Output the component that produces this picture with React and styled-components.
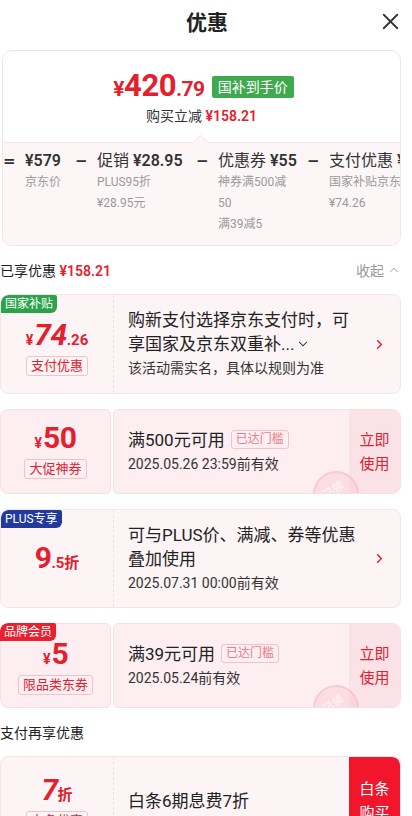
import React from "react";
import styled, { createGlobalStyle } from "styled-components";
import { X, ChevronRight, ChevronDown, ChevronUp } from "lucide-react";

const RED = "#e3202e";

const Global = createGlobalStyle`
  body {
    margin: 0;
    background: #fff;
    font-family: Roboto, "Noto Sans CJK SC", sans-serif;
    color: #222;
    overflow: hidden;
  }
`;

const breakdown = [
  { w: 38, title: <><b>¥579</b></>, subs: ["京东价"] },
  { w: 87, title: <>促销 <b>¥28.95</b></>, subs: ["PLUS95折", "¥28.95元"] },
  { w: 77, title: <>优惠券 <b>¥55</b></>, subs: ["神券满500减50", "满39减5"] },
  { w: 160, title: <>支付优惠 <b>¥74.26</b></>, subs: ["国家补贴京东支付优惠", "¥74.26"] },
];

export default function App() {
  return (
    <Page>
      <Global />
      <Header>
        <span />
        <Title>优惠</Title>
        <Close>
          <X size={27} strokeWidth={1.6} />
        </Close>
      </Header>

      <Content>
        <Summary>
          <SummaryTop>
            <PriceLine>
              <BigPrice>
                <small>¥</small>420<small>.79</small>
              </BigPrice>
              <GreenTag>国补到手价</GreenTag>
            </PriceLine>
            <SaveLine>
              购买立减 <RedStrong>¥158.21</RedStrong>
            </SaveLine>
          </SummaryTop>
          <SummaryBottom>
            <Breakdown>
              {breakdown.map((it, i) => (
                <React.Fragment key={i}>
                  <Op>{i === 0 ? "=" : "−"}</Op>
                  <Item $w={it.w}>
                    <ItemTitle>{it.title}</ItemTitle>
                    {it.subs.map((s) => (
                      <ItemSub key={s} $nowrap={i === 3}>{s}</ItemSub>
                    ))}
                  </Item>
                </React.Fragment>
              ))}
            </Breakdown>
          </SummaryBottom>
        </Summary>

        <SectionHead>
          <span>
            已享优惠 <RedStrong>¥158.21</RedStrong>
          </span>
          <Fold>
            收起 <ChevronUp size={14} strokeWidth={1.6} />
          </Fold>
        </SectionHead>

        <List>
          <Coupon $h={100}>
            <Tag $bg="#2aa34a">国家补贴</Tag>
            <Left $pt={8}>
              <Amount>
                <Yen>¥</Yen>
                <Num $italic>74</Num>
                <Dec>.26</Dec>
              </Amount>
              <Label>支付优惠</Label>
            </Left>
            <Right>
              <Body>
                <Main>购新支付选择京东支付时，可</Main>
                <Main>
                  享国家及京东双重补...
                  <ChevronDown size={14} strokeWidth={1.8} />
                </Main>
                <Sub>该活动需实名，具体以规则为准</Sub>
              </Body>
              <Arrow>
                <ChevronRight size={15} strokeWidth={2.4} />
              </Arrow>
            </Right>
          </Coupon>

          <Coupon $h={85} $ticket>
            <Left $ticket>
              <Amount>
                <Yen>¥</Yen>
                <Num>50</Num>
              </Amount>
              <Label>大促神券</Label>
            </Left>
            <Right $ticket>
              <Body>
                <Main>
                  满500元可用<Reached>已达门槛</Reached>
                </Main>
                <Sub>2025.05.26 23:59前有效</Sub>
              </Body>
              <Stamp>已领</Stamp>
              <Action>
                立即
                <br />
                使用
              </Action>
            </Right>
          </Coupon>

          <Coupon $h={99}>
            <Tag $bg="#223a9e">PLUS专享</Tag>
            <Left $pt={4}>
              <Amount>
                <Num>9</Num>
                <Dec>.5折</Dec>
              </Amount>
            </Left>
            <Right>
              <Body>
                <Main>可与PLUS价、满减、券等优惠</Main>
                <Main>叠加使用</Main>
                <Sub>2025.07.31 00:00前有效</Sub>
              </Body>
              <Arrow>
                <ChevronRight size={15} strokeWidth={2.4} />
              </Arrow>
            </Right>
          </Coupon>

          <Coupon $h={85} $ticket>
            <Tag $bg="#e8202f">品牌会员</Tag>
            <Left $ticket $pt={4}>
              <Amount>
                <Yen>¥</Yen>
                <Num>5</Num>
              </Amount>
              <Label>限品类东券</Label>
            </Left>
            <Right $ticket>
              <Body>
                <Main>
                  满39元可用<Reached>已达门槛</Reached>
                </Main>
                <Sub>2025.05.24前有效</Sub>
              </Body>
              <Stamp>已领</Stamp>
              <Action>
                立即
                <br />
                使用
              </Action>
            </Right>
          </Coupon>
        </List>

        <SectionHead>
          <span>支付再享优惠</span>
        </SectionHead>

        <Coupon $h={90}>
          <Left $pt={4}>
            <Amount>
              <Num $italic>7</Num>
              <Dec>折</Dec>
            </Amount>
            <Label>白条优惠</Label>
          </Left>
          <Right>
            <Body>
              <Main>白条6期息费7折</Main>
            </Body>
            <Action $solid>
              白条
              <br />
              购买
            </Action>
          </Right>
        </Coupon>
      </Content>
    </Page>
  );
}

const Page = styled.div`
  width: 412px;
  height: 816px;
  overflow: hidden;
`;

const Header = styled.div`
  height: 42px;
  display: grid;
  grid-template-columns: 1fr auto 1fr;
  align-items: center;
`;

const Title = styled.div`
  font-size: 21px;
  font-weight: 700;
  color: #222;
  padding-left: 2px;
`;

const Close = styled.div`
  justify-self: end;
  margin-right: 8px;
  display: flex;
  color: #333;
`;

const Content = styled.div`
  padding: 0 11px 0 0;
`;

const Summary = styled.div`
  margin: 8px 0 0 2px;
  border: 1px solid #f3e4e7;
  border-radius: 10px;
  overflow: hidden;
`;

const SummaryTop = styled.div`
  height: 91px;
  padding-top: 21px;
  box-sizing: border-box;
  display: flex;
  flex-direction: column;
  align-items: center;
`;

const PriceLine = styled.div`
  height: 30px;
  display: flex;
  align-items: center;
  gap: 7px;
  padding-left: 4px;
`;

const BigPrice = styled.div`
  color: ${RED};
  font-weight: 700;
  font-size: 31px;
  line-height: 30px;
  letter-spacing: -0.5px;

  small {
    font-size: 21px;
  }
`;

const GreenTag = styled.span`
  background: #3fa94f;
  color: #fff;
  font-size: 14px;
  line-height: 22px;
  padding: 0 6px;
  border-radius: 2px;
`;

const SaveLine = styled.div`
  margin-top: 4px;
  font-size: 14px;
  line-height: 20px;
  color: #333;
`;

const RedStrong = styled.span`
  color: ${RED};
  font-weight: 600;
`;

const SummaryBottom = styled.div`
  position: relative;
  background: #fdf6f7;
  border-top: 1px solid #f7e6e9;
  padding: 7px 0 10px;

  &::before {
    content: "";
    position: absolute;
    top: -6px;
    left: 192px;
    width: 10px;
    height: 10px;
    background: #fdf6f7;
    border-top: 1px solid #f7e6e9;
    border-left: 1px solid #f7e6e9;
    transform: rotate(45deg);
  }
`;

const Breakdown = styled.div`
  display: flex;
  align-items: flex-start;
  gap: 12px;
`;

const Op = styled.div`
  flex: 0 0 10px;
  min-width: 0;
  white-space: nowrap;
  font-family: "DejaVu Sans", sans-serif;
  font-size: 15px;
  font-weight: 700;
  line-height: 22px;
  color: #333;
`;

const Item = styled.div`
  flex: 0 0 ${(p) => p.$w}px;
  min-width: 0;
  display: flex;
  flex-direction: column;
`;

const ItemTitle = styled.div`
  font-size: 16px;
  line-height: 22px;
  color: #333;
  white-space: nowrap;

  b {
    font-weight: 600;
  }
`;

const ItemSub = styled.div`
  font-size: 12px;
  line-height: 21px;
  color: #9a9a9a;
  white-space: ${(p) => (p.$nowrap ? "nowrap" : "normal")};
`;

const SectionHead = styled.div`
  height: 48px;
  display: flex;
  align-items: center;
  justify-content: space-between;
  font-size: 14px;
  color: #222;
`;

const Fold = styled.span`
  display: flex;
  align-items: center;
  gap: 3px;
  color: #999;
`;

const List = styled.div`
  display: flex;
  flex-direction: column;
  gap: 15px;
`;

const Coupon = styled.div`
  position: relative;
  height: ${(p) => p.$h}px;
  display: flex;
  gap: ${(p) => (p.$ticket ? "2px" : "0")};
  border-radius: 8px;
  background: ${(p) => (p.$ticket ? "transparent" : "#fdf4f5")};
  border: ${(p) => (p.$ticket ? "none" : "1px solid #f6e4e7")};
  box-sizing: border-box;
  overflow: hidden;
`;

const Tag = styled.div`
  position: absolute;
  top: 0;
  left: 0;
  z-index: 2;
  background: ${(p) => p.$bg};
  color: #fff;
  font-size: 12px;
  line-height: 18px;
  padding: 0 4px;
  border-radius: 8px 2px 6px 0;
`;

const Left = styled.div`
  flex: 0 0 ${(p) => (p.$ticket ? "111px" : "113px")};
  box-sizing: border-box;
  display: flex;
  flex-direction: column;
  align-items: center;
  justify-content: center;
  gap: 2px;
  padding-top: ${(p) => p.$pt || 0}px;
  background: ${(p) => (p.$ticket ? "#fdeef1" : "transparent")};
  border-radius: ${(p) => (p.$ticket ? "8px 5px 5px 8px" : "0")};
  border: ${(p) => (p.$ticket ? "1px solid #f7e0e4" : "none")};
  border-right: ${(p) => (p.$ticket ? "1px solid #f7e0e4" : "1px dashed #f1e0e3")};
`;

const Amount = styled.div`
  color: ${RED};
  font-weight: 700;
  display: flex;
  align-items: baseline;
  line-height: 28px;
`;

const Yen = styled.span`
  font-size: 14px;
  margin-right: 1px;
`;

const Num = styled.span`
  font-size: 30px;
  font-style: ${(p) => (p.$italic ? "italic" : "normal")};
  letter-spacing: -0.5px;
`;

const Dec = styled.span`
  font-size: 15px;
`;

const Label = styled.div`
  font-size: 13px;
  line-height: 18px;
  color: ${RED};
  border: 1px solid #f2c4c9;
  border-radius: 3px;
  padding: 0 4px;
`;

const Right = styled.div`
  position: relative;
  flex: 1;
  display: flex;
  align-items: stretch;
  overflow: hidden;
  box-sizing: border-box;
  background: ${(p) => (p.$ticket ? "#fdeef1" : "transparent")};
  border-radius: ${(p) => (p.$ticket ? "5px 8px 8px 5px" : "0")};
  border: ${(p) => (p.$ticket ? "1px solid #f7e0e4" : "none")};
`;

const Body = styled.div`
  flex: 1;
  padding-left: 14px;
  display: flex;
  flex-direction: column;
  justify-content: center;
`;

const Main = styled.div`
  font-size: 17px;
  line-height: 24px;
  color: #222;
  display: flex;
  align-items: center;
  gap: 2px;
`;

const Sub = styled.div`
  font-size: 14px;
  line-height: 24px;
  color: #333;
`;

const Reached = styled.span`
  margin-left: 4px;
  font-size: 12px;
  line-height: 17px;
  color: #e77f8b;
  border: 1px solid #f1c3c9;
  border-radius: 3px;
  padding: 0 4px;
`;

const Arrow = styled.div`
  display: flex;
  align-items: center;
  padding: 0 13px 0 6px;
  color: ${RED};
`;

const Action = styled.div`
  flex: 0 0 51px;
  display: flex;
  align-items: center;
  justify-content: center;
  text-align: center;
  font-size: 15px;
  line-height: 24px;
  color: ${(p) => (p.$solid ? "#fff" : RED)};
  background: ${(p) => (p.$solid ? "#f2162d" : "#fbe2e7")};
  border-radius: 0 8px 8px 0;
`;

const Stamp = styled.div`
  position: absolute;
  right: 41px;
  bottom: -24px;
  width: 46px;
  height: 46px;
  border-radius: 50%;
  border: 2px solid rgba(244, 170, 180, 0.35);
  background: rgba(250, 200, 208, 0.45);
  color: rgba(255, 255, 255, 0.9);
  font-size: 11px;
  display: flex;
  justify-content: center;
  padding-top: 7px;
  box-sizing: border-box;
  transform: rotate(-35deg);
`;
